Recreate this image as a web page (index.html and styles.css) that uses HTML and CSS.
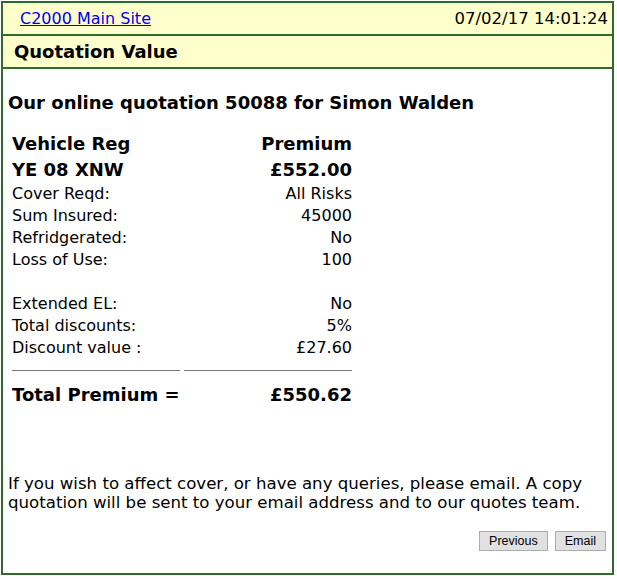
FILE: index.html
```html
<!DOCTYPE html>
<html lang="en">
<head>
  <meta charset="UTF-8" />
  <title>Quotation Value - C2000</title>
  <link rel="stylesheet" href="styles.css">
</head>
<body>
  <div class="frame">
    <div class="topbar">
      <a href="#" class="site-link">C2000 Main Site</a>
      <span class="stamp">07/02/17 14:01:24</span>
    </div>
    <div class="titlebar">Quotation Value</div>

    <div class="content">
      <h3 class="quote-head">Our online quotation 50088 for Simon Walden</h3>

      <table class="quote">
        <tr class="big"><td>Vehicle Reg</td><td class="num">Premium</td></tr>
        <tr class="big"><td>YE 08 XNW</td><td class="num">&pound;552.00</td></tr>
        <tr><td>Cover Reqd:</td><td class="num">All Risks</td></tr>
        <tr><td>Sum Insured:</td><td class="num">45000</td></tr>
        <tr><td>Refridgerated:</td><td class="num">No</td></tr>
        <tr><td>Loss of Use:</td><td class="num">100</td></tr>
        <tr><td>&nbsp;</td><td></td></tr>
        <tr><td>Extended EL:</td><td class="num">No</td></tr>
        <tr><td>Total discounts:</td><td class="num">5%</td></tr>
        <tr><td>Discount value :</td><td class="num">&pound;27.60</td></tr>
        <tr class="rule"><td><hr></td><td><hr></td></tr>
        <tr class="big total"><td>Total Premium =</td><td class="num">&pound;550.62</td></tr>
      </table>

      <p class="note">If you wish to affect cover, or have any queries, please email. A copy quotation will be sent to your email address and to our quotes team.</p>

      <div class="actions">
        <button class="btn">Previous</button>
        <button class="btn">Email</button>
      </div>
    </div>
  </div>
</body>
</html>
```

FILE: styles.css
```css
body {
  margin: 0;
  padding: 0;
  font-family: "DejaVu Sans", Verdana, sans-serif;
  background: white;
  color: black;
}

.frame {
  margin: 1px 0 0 1px;
  width: 609px;
  height: 570px;
  border: 2px solid #2f6b2f;
  display: flex;
  flex-direction: column;
}

.topbar {
  background-color: #ffffcc;
  height: 31px;
  border-bottom: 2px solid #2f6b2f;
  display: flex;
  justify-content: space-between;
  align-items: center;
  padding: 0 4px 0 17px;
  font-size: 16px;
}

.stamp {
  font-size: 16.5px;
}

.site-link {
  color: #0000ee;
  text-decoration: underline;
}

.titlebar {
  background-color: #ffffcc;
  height: 31px;
  border-bottom: 2px solid #2f6b2f;
  display: flex;
  align-items: center;
  padding-left: 11px;
  font-size: 18px;
  font-weight: bold;
}

.content {
  flex: 1;
  padding: 0 5px;
}

.quote-head {
  font-size: 18px;
  line-height: 20px;
  margin: 24px 0 18px 0;
}

.quote {
  border-collapse: collapse;
  margin-left: 2px;
  font-size: 16px;
}

.quote td {
  width: 168px;
  height: 22px;
  padding: 0 2px;
  line-height: 22px;
  white-space: nowrap;
}

.quote .num {
  text-align: right;
}

.quote tr.big td {
  height: 26px;
  font-size: 18px;
  font-weight: bold;
}

.quote tr.total td {
  height: 28px;
}

.quote tr.rule td {
  padding: 0 1px;
}

.quote hr {
  margin: 0 1px;
  border: none;
  border-top: 1px solid #777;
  height: 0;
}

.note {
  font-size: 16.6px;
  line-height: 19px;
  margin: 65px 0 19px 0;
}

.actions {
  display: flex;
  justify-content: flex-end;
  gap: 7px;
  padding-right: 1px;
}

.btn {
  font-family: "Liberation Sans", Arial, sans-serif;
  font-size: 12.5px;
  height: 20px;
  padding: 0 9px;
  background-color: #e1e1e1;
  border: 1px solid #adadad;
  color: black;
}
```
